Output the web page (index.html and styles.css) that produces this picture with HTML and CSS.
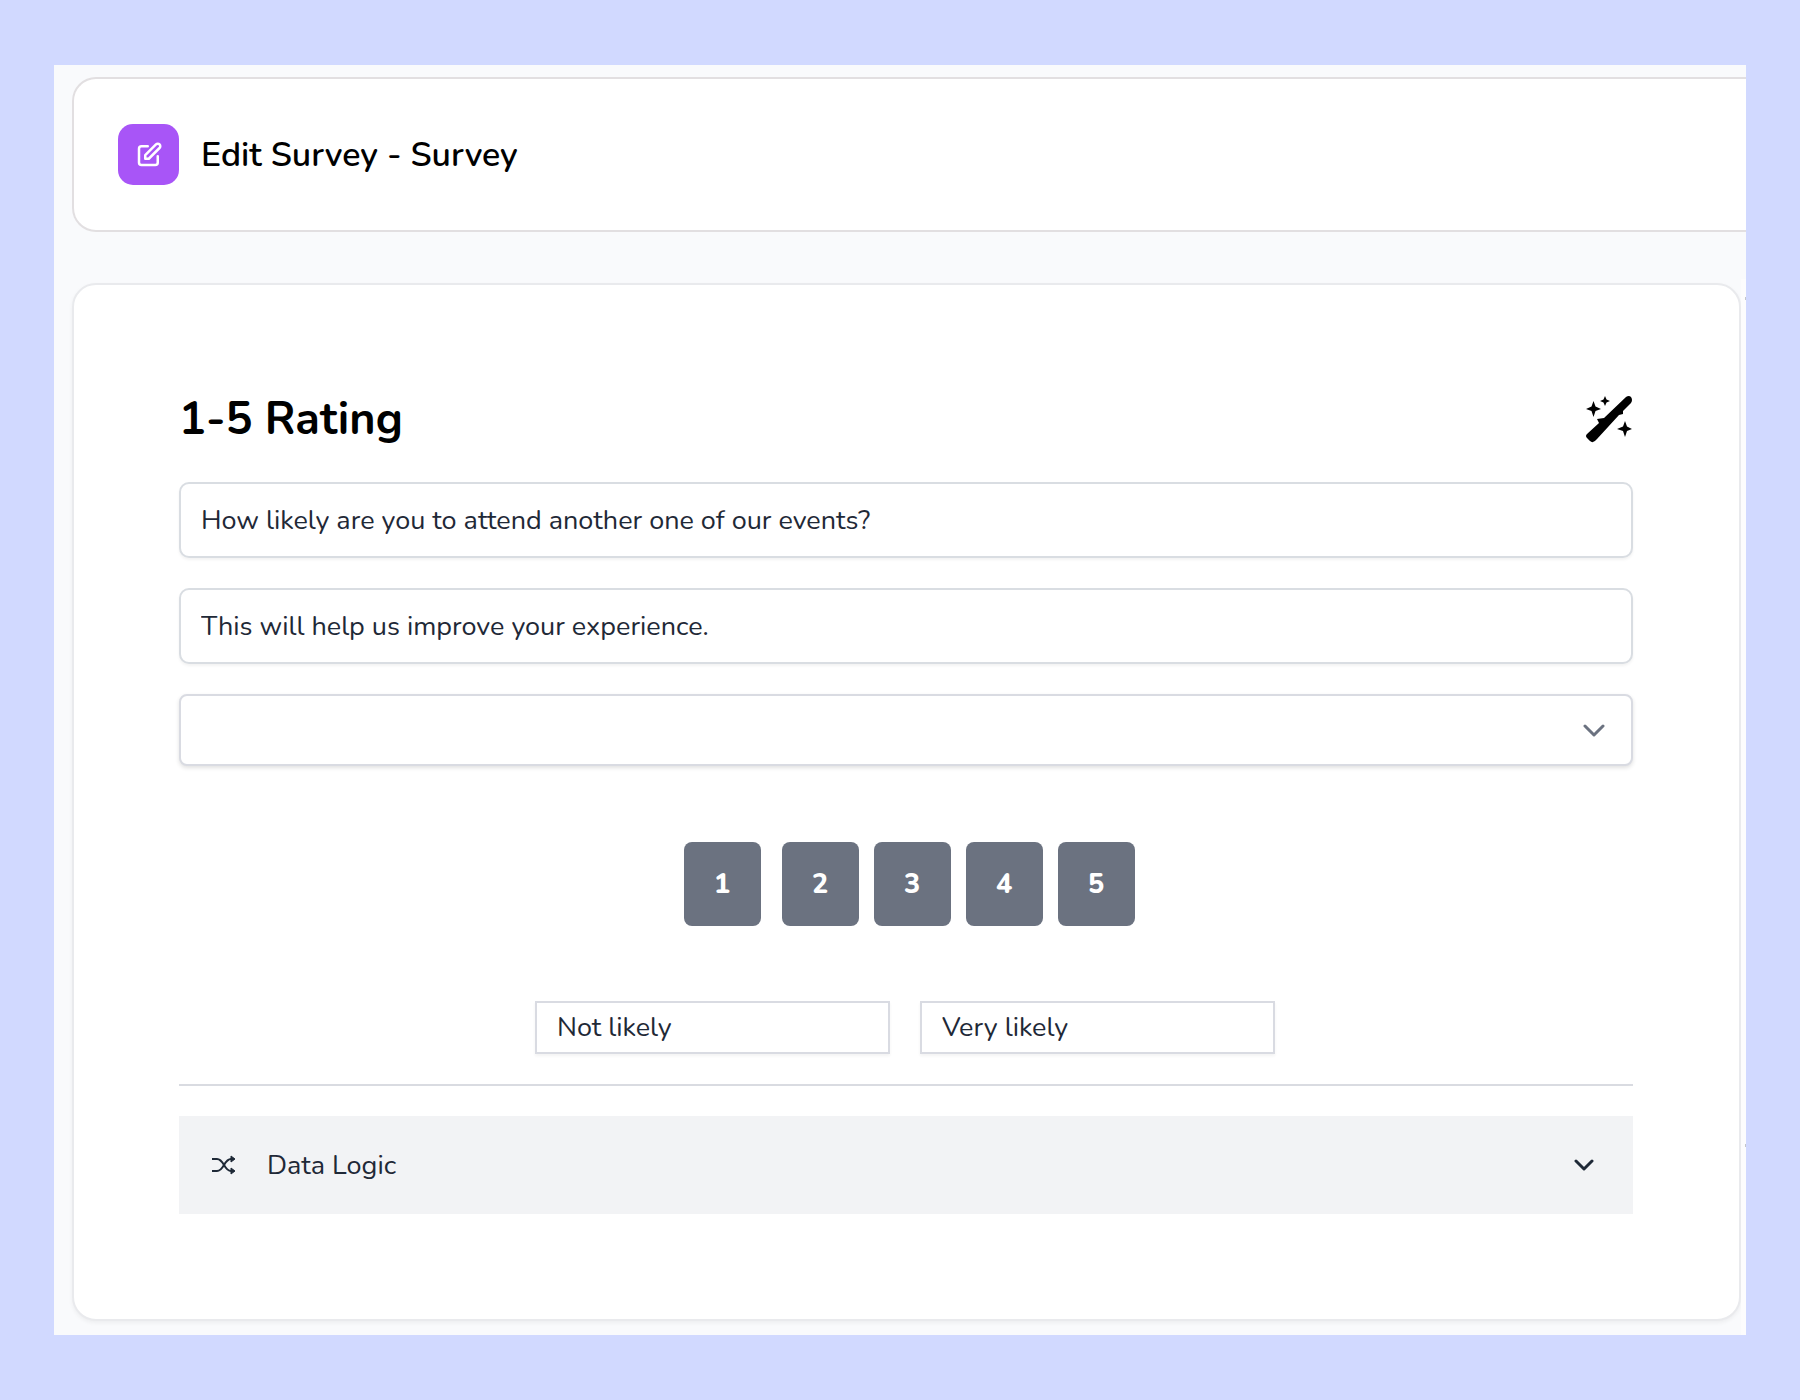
FILE: index.html
```
<!DOCTYPE html>
<html lang="en">
<head>
    <meta charset="UTF-8">
    <meta name="viewport" content="width=device-width, initial-scale=1.0">
    <title>Edit Survey - Survey</title>
    <link rel="stylesheet" href="styles.css">
</head>
<body>

    <div class="app">
        <!-- Page header -->
        <header class="page-header">
            <span class="header-icon">
                <svg width="30" height="30" viewBox="0 0 24 24" fill="none" stroke="currentColor" stroke-width="2" stroke-linecap="round" stroke-linejoin="round">
                    <path d="M11 5H6a2 2 0 00-2 2v11a2 2 0 002 2h11a2 2 0 002-2v-5m-1.414-9.414a2 2 0 112.828 2.828L11.828 15H9v-2.828l8.586-8.586z"/>
                </svg>
            </span>
            <h1>Edit Survey - Survey</h1>
        </header>

        <div class="workspace">
            <!-- Question card -->
            <main class="card">
                <div class="card-title">
                    <h2>1-5 Rating</h2>
                    <button type="button" class="magic-button" aria-label="Generate with AI">
                        <svg width="48" height="48" viewBox="0 0 48 48" fill="currentColor">
                            <path d="M2 38 L14 27 L12 23 L19 22 L41 1 Q44 -1 46 1 Q48 4 46 7 L38 15 L38 18 L34 19 L12 43 Q8 48 5 45 L2 42 Q0 40 2 38z"/>
                            <path d="M8.500 5 L10.500 10.500 L16 13 L10.500 15 L8.500 21 L6.500 15 L1 13 L6.500 10.500z"/>
                            <path d="M20 0 L21.500 3.500 L25 5 L21.500 6.500 L20 10 L18.500 6.500 L15 5 L18.500 3.500z"/>
                            <path d="M40 25 L42 30.500 L47 33 L42 35 L40 41 L38 35 L32 33 L38 30.500z"/>
                        </svg>
                    </button>
                </div>

                <form class="question-form">
                    <input type="text" class="field" aria-label="Question" value="How likely are you to attend another one of our events?">
                    <input type="text" class="field" aria-label="Description" value="This will help us improve your experience.">

                    <div class="select-wrap">
                        <select class="select" aria-label="Option">
                            <option></option>
                        </select>
                        <svg class="select-arrow" width="22" height="14" viewBox="0 0 22 14" fill="none" stroke="currentColor" stroke-width="3" stroke-linecap="round" stroke-linejoin="round">
                            <path d="M2 2l9 9 9-9"/>
                        </svg>
                    </div>

                    <div class="rating">
                        <button type="button">1</button>
                        <button type="button">2</button>
                        <button type="button">3</button>
                        <button type="button">4</button>
                        <button type="button">5</button>
                    </div>

                    <div class="scale-labels">
                        <input type="text" aria-label="Lowest rating label" value="Not likely">
                        <input type="text" aria-label="Highest rating label" value="Very likely">
                    </div>
                </form>

                <button type="button" class="accordion">
                    <svg width="26" height="20" viewBox="0 0 26 20" fill="none" stroke="currentColor" stroke-width="2" stroke-linejoin="round">
                        <path d="M1 4h5c7 0 7 12 14 12h3M1 16h5c7 0 7-12 14-12h3"/>
                        <path d="M20 1l4 3-4 3zM20 13l4 3-4 3z" fill="currentColor" stroke-width="1"/>
                    </svg>
                    <span>Data Logic</span>
                    <svg class="accordion-arrow" width="20" height="13" viewBox="0 0 20 13" fill="none" stroke="currentColor" stroke-width="3" stroke-linecap="round" stroke-linejoin="round">
                        <path d="M2 2l8 8 8-8"/>
                    </svg>
                </button>
            </main>

            <!-- Edge of the side panel -->
            <aside class="side-panel"></aside>
        </div>
    </div>

</body>
</html>
```
FILE: styles.css
```
* {
    box-sizing: border-box;
}

body {
    margin: 0;
    padding: 65px 54px;
    background-color: #d1d9ff;
    font-family: 'Nunito', 'Lato', sans-serif;
    font-size: 27px;
    color: #1f2937;
}

button,
input,
select {
    font: inherit;
    color: inherit;
}

.app {
    padding: 12px 0 0 18px;
    background-color: #f9fafc;
    overflow: hidden;
}

/* Header */
.page-header {
    display: flex;
    align-items: center;
    gap: 22px;
    padding: 45px 44px;
    background: white;
    border: 2px solid #e2dfe1;
    border-right: 0;
    border-radius: 24px 0 0 24px;
}

.header-icon {
    display: flex;
    align-items: center;
    justify-content: center;
    width: 61px;
    height: 61px;
    border-radius: 15px;
    background-color: #a855f7;
    color: white;
}

.page-header h1 {
    margin: 0;
    font-size: 34px;
    font-weight: 600;
    line-height: 48px;
    color: black;
}

/* Card and side panel */
.workspace {
    display: flex;
    margin-top: 47px;
}

.card {
    flex: 1;
    margin: 4px 0 14px;
    padding: 105px 106px 105px 105px;
    background: white;
    border: 2px solid #e9eaed;
    border-radius: 24px;
    box-shadow: 0 2px 4px rgba(0, 0, 0, 0.05);
}

/* Only the left edge of the panel is in view, its boxes start right at the edge */
.side-panel {
    display: flex;
    flex-direction: column;
    justify-content: space-between;
    align-items: flex-end;
    width: 5px;
    padding: 18px 0 188px;
    background-color: #fcfcfd;
}

.side-panel::before,
.side-panel::after {
    content: "";
    width: 1px;
    height: 3px;
    background-color: #c4c6ca;
}

.card-title {
    display: flex;
    align-items: center;
    justify-content: space-between;
    margin-bottom: 32px;
}

.card-title h2 {
    margin: 0;
    font-size: 45px;
    font-weight: 700;
    line-height: 60px;
    color: black;
}

.magic-button {
    display: flex;
    padding: 0;
    border: 0;
    background: none;
    color: black;
    cursor: pointer;
}

/* Form fields */
.question-form {
    display: flex;
    flex-direction: column;
    gap: 30px;
    padding-bottom: 30px;
    border-bottom: 2px solid #d9dbe1;
}

.field {
    width: 100%;
    height: 76px;
    padding: 0 20px;
    border: 2px solid #d9dde2;
    border-radius: 10px;
    background: white;
    box-shadow: 0 2px 3px rgba(0, 0, 0, 0.05);
}

.select-wrap {
    position: relative;
}

.select {
    display: block;
    width: 100%;
    height: 72px;
    padding: 0 60px 0 20px;
    border: 2px solid #d9dbe2;
    border-radius: 8px;
    background: white;
    box-shadow: 0 2px 4px rgba(0, 0, 0, 0.12);
    appearance: none;
}

.select-arrow {
    position: absolute;
    top: 30px;
    right: 28px;
    color: #6b7280;
    pointer-events: none;
}

/* Rating buttons */
.rating {
    display: flex;
    justify-content: center;
    gap: 15px;
    margin: 46px 0 45px;
    padding-left: 6px;
}

.rating button {
    width: 77px;
    height: 84px;
    padding: 0;
    border: 0;
    border-radius: 8px;
    background-color: #6b7280;
    color: white;
    font-weight: 800;
    cursor: pointer;
}

.rating button:first-child {
    margin-right: 6px;
}

.scale-labels {
    display: flex;
    justify-content: center;
    gap: 30px;
    padding-right: 2px;
}

.scale-labels input {
    width: 355px;
    height: 53px;
    padding: 0 20px;
    border: 2px solid #d9dbe2;
    background: white;
    box-shadow: 0 2px 3px rgba(0, 0, 0, 0.05);
}

/* Data logic */
.accordion {
    display: flex;
    align-items: center;
    gap: 30px;
    width: 100%;
    height: 98px;
    margin-top: 30px;
    padding: 0 39px 0 32px;
    border: 0;
    background-color: #f2f3f5;
    cursor: pointer;
}

.accordion-arrow {
    margin-left: auto;
}
```
